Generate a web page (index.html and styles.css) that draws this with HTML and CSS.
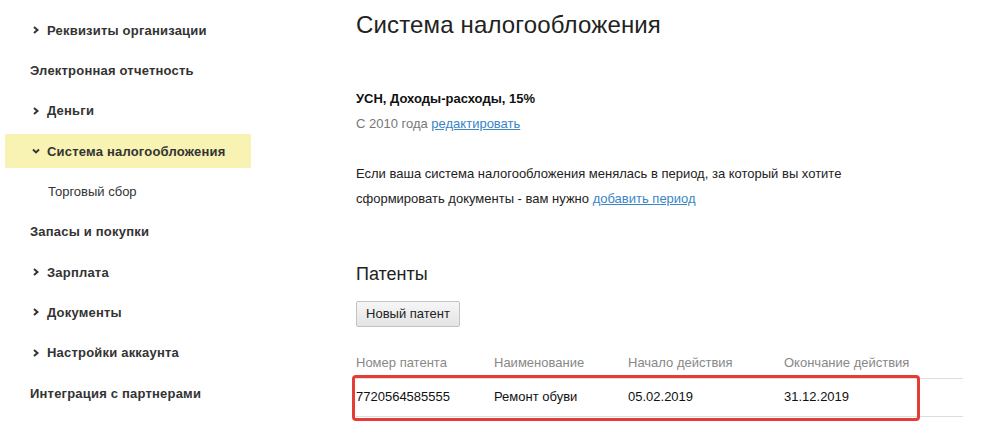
FILE: index.html
```html
<!DOCTYPE html>
<html lang="ru">
<head>
<meta charset="utf-8">
<title>Система налогообложения</title>
<link rel="stylesheet" href="styles.css">
</head>
<body>
<div class="page">
  <nav class="sidebar">
    <div class="nav-item"><svg class="chev" width="8" height="8" viewBox="0 0 8 8"><polyline points="2,1 5.5,4 2,7" fill="none" stroke="#333" stroke-width="2"/></svg><span>Реквизиты организации</span></div>
    <div class="nav-item plain"><span>Электронная отчетность</span></div>
    <div class="nav-item"><svg class="chev" width="8" height="8" viewBox="0 0 8 8"><polyline points="2,1 5.5,4 2,7" fill="none" stroke="#333" stroke-width="2"/></svg><span>Деньги</span></div>
    <div class="nav-item active"><svg class="chev" width="8" height="8" viewBox="0 0 8 8"><polyline points="1,2.5 4,5.5 7,2.5" fill="none" stroke="#333" stroke-width="1.8"/></svg><span>Система налогообложения</span></div>
    <div class="nav-item sub"><span>Торговый сбор</span></div>
    <div class="nav-item plain"><span>Запасы и покупки</span></div>
    <div class="nav-item"><svg class="chev" width="8" height="8" viewBox="0 0 8 8"><polyline points="2,1 5.5,4 2,7" fill="none" stroke="#333" stroke-width="2"/></svg><span>Зарплата</span></div>
    <div class="nav-item"><svg class="chev" width="8" height="8" viewBox="0 0 8 8"><polyline points="2,1 5.5,4 2,7" fill="none" stroke="#333" stroke-width="2"/></svg><span>Документы</span></div>
    <div class="nav-item"><svg class="chev" width="8" height="8" viewBox="0 0 8 8"><polyline points="2,1 5.5,4 2,7" fill="none" stroke="#333" stroke-width="2"/></svg><span>Настройки аккаунта</span></div>
    <div class="nav-item plain"><span>Интеграция с партнерами</span></div>
  </nav>
  <main class="content">
    <h1 class="title">Система налогообложения</h1>
    <div class="tax">
      <div class="tax-name">УСН, Доходы-расходы, 15%</div>
      <div class="tax-since">С 2010 года <a href="#" class="link">редактировать</a></div>
    </div>
    <p class="note">Если ваша система налогообложения менялась в период, за который вы хотите<br>сформировать документы - вам нужно <a href="#" class="link">добавить период</a></p>
    <h2 class="subtitle">Патенты</h2>
    <button class="btn">Новый патент</button>
    <div class="table">
      <div class="row head">
        <div class="c1">Номер патента</div>
        <div class="c2">Наименование</div>
        <div class="c3">Начало действия</div>
        <div class="c4">Окончание действия</div>
      </div>
      <div class="row body">
        <div class="c1">7720564585555</div>
        <div class="c2">Ремонт обуви</div>
        <div class="c3">05.02.2019</div>
        <div class="c4">31.12.2019</div>
        <div class="mark"></div>
      </div>
    </div>
  </main>
</div>
</body>
</html>
```
FILE: styles.css
```css
html, body {
  margin: 0;
  padding: 0;
  background: #fff;
}
body {
  font-family: "Liberation Sans", Arial, sans-serif;
  color: #222;
  font-size: 13px;
}
.page {
  display: flex;
  width: 983px;
  height: 441px;
  overflow: hidden;
}
.sidebar {
  width: 246px;
  margin-left: 5px;
  padding-top: 13px;
  display: flex;
  flex-direction: column;
  gap: 6.35px;
  flex: none;
}
.nav-item {
  height: 34px;
  display: flex;
  align-items: center;
  padding-left: 27px;
  font-weight: bold;
  font-size: 13px;
  letter-spacing: 0.2px;
  color: #333;
}
.nav-item .chev {
  width: 8px;
  height: 8px;
  margin-right: 7px;
  flex: none;
}
.nav-item.plain {
  padding-left: 25px;
}
.nav-item.sub {
  padding-left: 43px;
  font-weight: normal;
  letter-spacing: 0;
  color: #333;
}
.nav-item.active {
  background: #f8f2b3;
}
.content {
  margin-left: 105px;
  flex: 1;
  display: flex;
  flex-direction: column;
  align-items: flex-start;
}
.title {
  margin: 11px 0 0;
  font-size: 24px;
  line-height: 28px;
  font-weight: normal;
  letter-spacing: 0.15px;
  color: #222;
}
.tax {
  margin-top: 47px;
  line-height: 25px;
}
.tax-name {
  font-weight: bold;
  color: #111;
}
.tax-since {
  color: #777;
}
.link {
  color: #3a85c6;
  text-decoration: underline;
}
.note {
  margin: 24.5px 0 0;
  line-height: 25px;
  color: #222;
}
.subtitle {
  margin: 52px 0 0;
  font-size: 18px;
  line-height: 22px;
  font-weight: normal;
  color: #222;
}
.btn {
  margin-top: 16px;
  width: 104px;
  height: 26px;
  padding: 0;
  font-family: "Liberation Sans", Arial, sans-serif;
  font-size: 13px;
  color: #222;
  background: linear-gradient(#f6f6f6, #e4e4e4);
  border: 1px solid #c4c4c4;
  border-radius: 2px;
}
.table {
  margin-top: 28px;
  width: 607px;
}
.row {
  display: grid;
  grid-template-columns: 138px 134px 156px 1fr;
  line-height: 16px;
  position: relative;
}
.row.head {
  color: #888;
  padding-bottom: 7px;
  border-bottom: 1px solid #ddd;
}
.row.body {
  padding: 10.5px 0;
  border-bottom: 1px solid #ddd;
  color: #111;
}
.mark {
  position: absolute;
  left: -4px;
  top: -4px;
  width: 562px;
  height: 40px;
  border: 3px solid #e53c35;
  border-radius: 4px;
}
```
